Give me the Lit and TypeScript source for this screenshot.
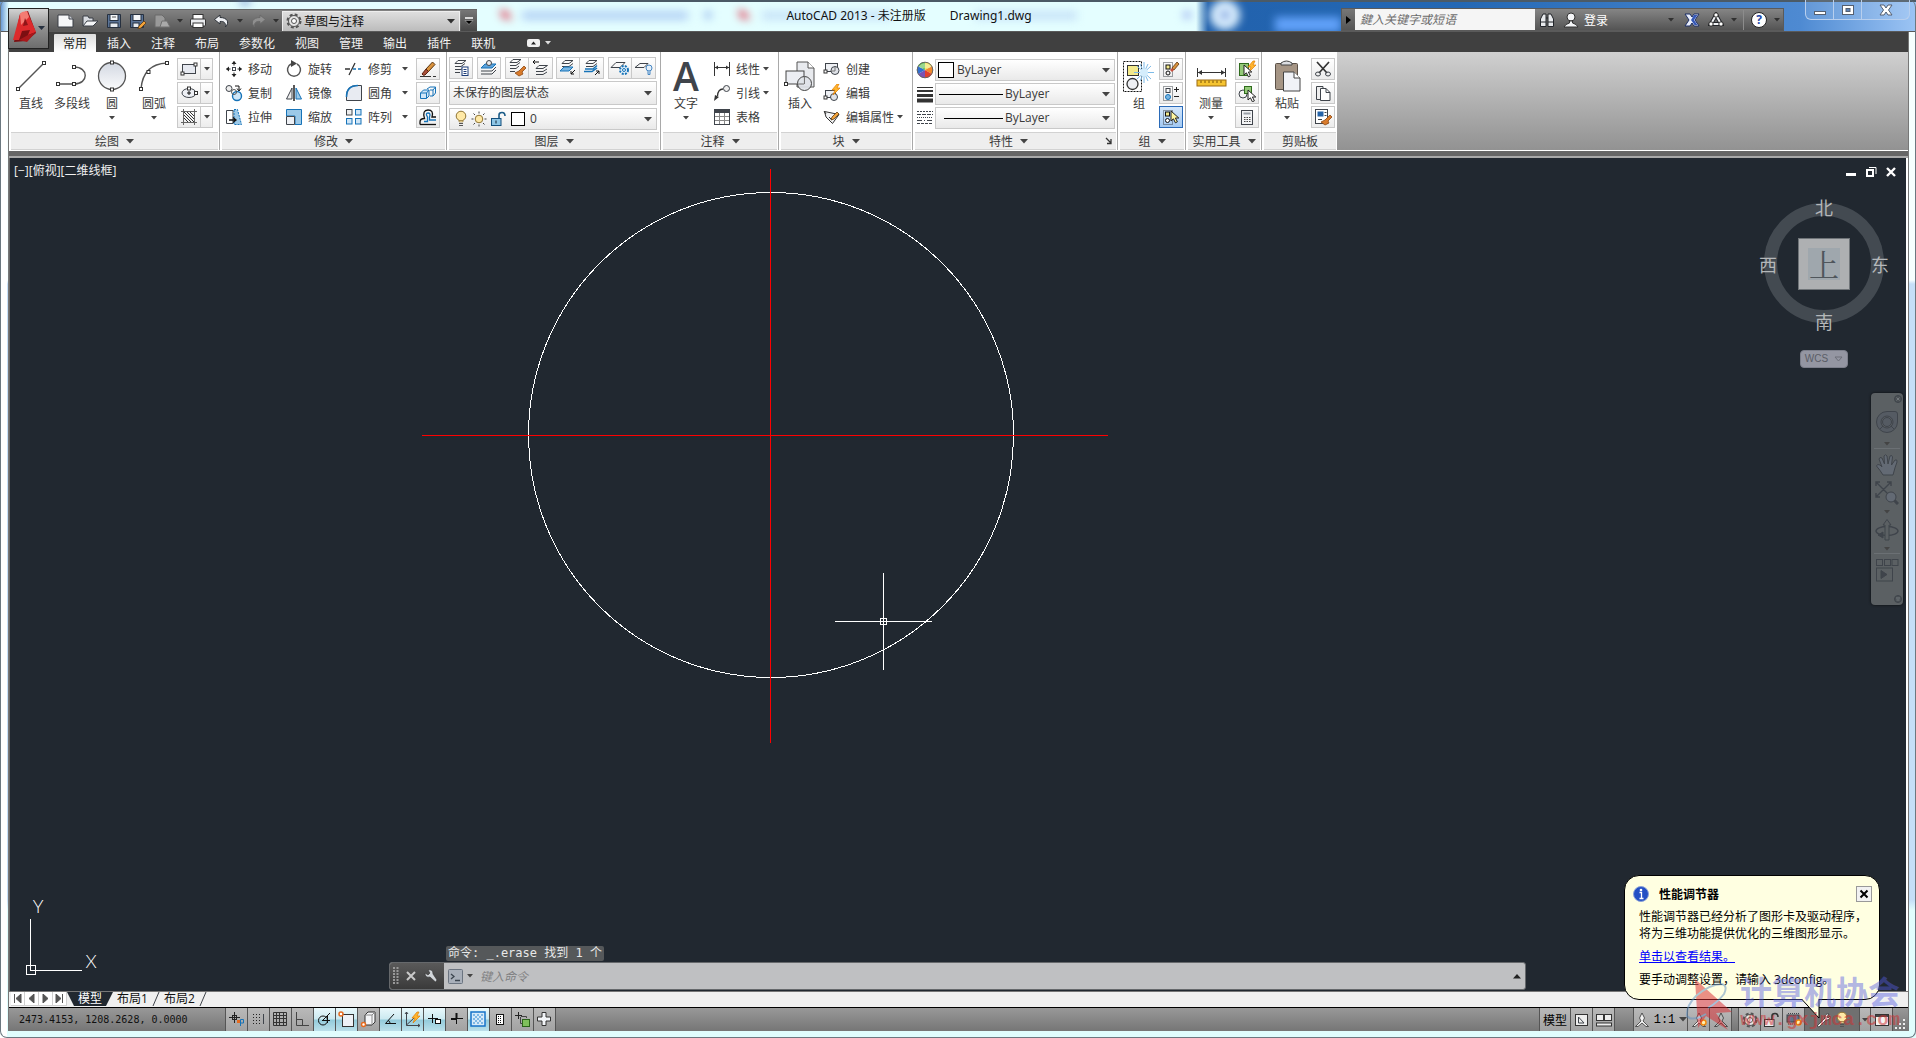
import { LitElement, html, svg, css } from "lit";
import { customElement } from "lit/decorators.js";
import { classMap } from "lit/directives/class-map.js";

const BLUE = "#1673b8";

/* ---------- drawing helpers ---------- */
const ic = (w: number, h: number, body: unknown, cls = "") => html`
  <svg class="ic ${cls}" width=${w} height=${h} viewBox="0 0 ${w} ${h}" aria-hidden="true">${body}</svg>`;
const grip = (x: number, y: number) =>
  svg`<rect x=${x - 1.5} y=${y - 1.5} width="3" height="3" fill="#fff" stroke="#333"/>`;
const caret = html`<svg class="ic caret" width="6" height="4" viewBox="0 0 6 4" aria-hidden="true"><path d="M0 0H6L3 3.5Z" fill="currentColor" stroke="none"/></svg>`;
const bigCaret = html`<svg class="ic caret" width="8" height="5" viewBox="0 0 8 5" aria-hidden="true"><path d="M0 0H8L4 4.5Z" fill="currentColor" stroke="none"/></svg>`;

const sheets = svg`<path d="M6 1.500H14L10 4.500H3ZM3 7.500H9L13 4.500M3 10.500H9L12 8M3 13.500H8" />`;
const pencil = (x: number, y: number) =>
  svg`<path d="M${x} ${y}l5-5 2 2-5 5-3 1z" fill="#f3a33a" stroke="#5d3b12" stroke-width=".8"/>`;
const bolt = (x: number, y: number) =>
  svg`<path d="M${x + 5} ${y}L${x} ${y + 6}H${x + 3}L${x + 1} ${y + 11}L${x + 8} ${y + 4}H${x + 5}L${x + 7} ${y}Z" fill="#ffb52e" stroke="#e07b00" stroke-width=".7"/>`;
const pointer = (x: number, y: number, fill = "#fff") =>
  svg`<path d="M${x} ${y}v10l2.400-2.200 2 4 2-1-2-3.800h3.400z" fill=${fill} stroke="#222"/>`;
const brush = svg`<path d="M17 8L19 10L15 14L16 16L12 18L8 15L12 13L13 12Z" fill="#d97b2b" stroke="#8c4610" stroke-width=".8"/>`;

const I = {
  newFile: ic(18, 16, svg`<path d="M1 2H12L16 6V14H1Z" fill="#f6f7f9" stroke="#3a3f47"/><path d="M12 2V6H16" fill="#c9ccd2" stroke="#3a3f47"/>`),
  open: ic(18, 16, svg`<path d="M2 13V3H7L8 5H12V8" fill="#d8dbe0" stroke="#3a3f47"/><path d="M2 13L6 8H17L12 13Z" fill="#f4f5f7" stroke="#3a3f47"/>`),
  save: ic(16, 16, svg`<path d="M1.500 1.500H14.500V14.500H1.500Z" fill="#5a7396" stroke="#26303f"/><rect x="4" y="1.500" width="8" height="6" fill="#f4f6f8" stroke="#26303f"/><rect x="4" y="10" width="8" height="4.500" fill="#e7ebef" stroke="#26303f"/><path d="M6 4H10" stroke="#555"/>`),
  saveAs: ic(18, 16, svg`<path d="M1.500 1.500H14.500V14.500H1.500Z" fill="#5a7396" stroke="#26303f"/><rect x="4" y="1.500" width="8" height="6" fill="#f4f6f8" stroke="#26303f"/><rect x="4" y="10" width="6" height="4.500" fill="#e7ebef" stroke="#26303f"/>${pencil(10, 13)}`),
  plotGrey: ic(18, 16, svg`<path d="M2 2H9L12 5V14H2Z" fill="#999" stroke="#6a6a6a"/><path d="M7 14L9 8H14L17 14Z" fill="#aaa" stroke="#707070"/>`),
  print: ic(18, 16, svg`<rect x="4" y="1.500" width="10" height="5" fill="#fff" stroke="#333"/><rect x="1.500" y="6" width="15" height="7" rx="1" fill="#e9ebee" stroke="#333"/><rect x="4" y="10" width="10" height="4.500" fill="#fff" stroke="#333"/>`),
  undo: ic(18, 16, svg`<path d="M7 2L1.500 6.500L7 11V8.500C11 8 13 10 12.500 14C17 9 14 4.500 7 4.500Z" fill="#eef0f3" stroke="#2d3239"/>`),
  redo: ic(18, 16, svg`<path d="M11 2L16.500 6.500L11 11V8.500C7 8 5 10 5.500 14C1 9 4 4.500 11 4.500Z" fill="#8f8f8f" stroke="#6b6b6b"/>`),
  gear: ic(16, 16, svg`<circle cx="8" cy="8" r="6" stroke="#555" stroke-width="3" stroke-dasharray="2.700 2"/><circle cx="8" cy="8" r="5.500" fill="#e4e4e4" stroke="#555"/><circle cx="8" cy="8" r="2.500" fill="#fff" stroke="#555"/>`),

  line: ic(32, 32, svg`<path d="M3 29L29 3" stroke="#555" stroke-width="1.400"/>${grip(3, 29)}${grip(29, 3)}`),
  pline: ic(32, 32, svg`<path d="M2 24H18C33 24 33 7 18 7" stroke="#555" stroke-width="1.400"/>${grip(2, 24)}${grip(18, 24)}${grip(18, 7)}`),
  circle: ic(32, 32, svg`<circle cx="16" cy="16" r="13.500" fill="url(#disc)" stroke="#555" stroke-width="1.300"/><defs><linearGradient id="disc" x1="0" y1="0" x2="0" y2="1"><stop offset="0" stop-color="#d3d8e2"/><stop offset="1" stop-color="#fafbfc"/></linearGradient></defs>${grip(16, 2.5)}${grip(16, 29.5)}`),
  arc: ic(32, 32, svg`<path d="M3 29Q5 4 29 3" stroke="#555" stroke-width="1.400"/>${grip(3, 29)}${grip(10.5, 12)}${grip(29, 3)}`),
  rect: ic(18, 16, svg`<rect x="2.500" y="3.500" width="13" height="9" fill="#e6e9f0"/>${grip(2.5, 12.5)}${grip(15.5, 3.5)}`),
  ellipse: ic(18, 16, svg`<ellipse cx="9" cy="8" rx="7" ry="4.500" fill="#eef0f5"/><path d="M7 8H11M9 6V10" stroke="#111"/>${grip(9, 3.5)}${grip(16, 8)}`),
  hatch: ic(18, 18, svg`<path d="M3.500 1V17M14.500 1V17M1 3.500H17M1 14.500H17" stroke="#666"/><path d="M4 4L14 14M4 7L11 14M4 10L8 14M7 4L14 11M10 4L14 8" stroke="#333"/>`),

  move: ic(18, 18, svg`<rect x="7.500" y="7.500" width="3" height="3"/><path d="M9 1.500V5.500M9 12.500V16.500M1.500 9H5.500M12.500 9H16.500" stroke="#222"/><path d="M6.500 4L9 1L11.500 4ZM6.500 14L9 17L11.500 14ZM4 6.500L1 9L4 11.500ZM14 6.500L17 9L14 11.500Z" fill="#222" stroke="none"/>`),
  copy: ic(18, 18, svg`<circle cx="4" cy="4.500" r="3" fill="#eee"/><circle cx="12" cy="12" r="4.500" fill="#cfe6f8" stroke=${BLUE} stroke-width="1.400"/><circle cx="9" cy="8" r="2.500" stroke="#555"/><path d="M10 2H14V6M12 4.500L14 7L16 4.500" stroke="#111"/>`),
  stretch: ic(18, 18, svg`<path d="M1.500 2.500H8V15.500H1.500Z" fill="#fff"/><path d="M9 1.500H12.500L16.500 16.500H9Z" fill="#9cc9e8" stroke=${BLUE} stroke-dasharray="2 1"/><path d="M4 12H10M8 9.500L11 12L8 14.500" stroke="#111" stroke-width="1.300"/>`),
  rotate: ic(18, 18, svg`<path d="M6 4A6.500 6.500 0 1 0 12 4" stroke="#555" stroke-width="1.500"/><path d="M6 0L12 3.500L6 7Z" fill="#444" stroke="none"/>`),
  mirror: ic(18, 18, svg`<path d="M7 4V15H1.500Z" fill="#eee"/><path d="M11 4V15H16.500Z" fill="#9cc9e8" stroke=${BLUE}/><path d="M9 1V17" stroke="#111" stroke-width="1.400"/>`),
  scale: ic(18, 18, svg`<path d="M1.500 1.500H16.500V16.500H10V8H1.500Z" fill="#9cc9e8" stroke=${BLUE}/><path d="M1.500 8.500H9.500V16.500H1.500Z" fill="#eef0f4"/>`),
  trim: ic(20, 18, svg`<path d="M1 9H6M5 15L11 3" stroke="#333" stroke-width="1.300"/><path d="M9 9H19" stroke=${BLUE} stroke-width="1.400" stroke-dasharray="3 2"/>`),
  fillet: ic(18, 18, svg`<path d="M1.500 16.500V12Q1.500 1.500 12 1.500H16.500V16.500Z" fill="#e8ebf2"/><path d="M1.500 13Q1.500 1.500 13 1.500" stroke=${BLUE} stroke-width="1.600"/>`),
  array: ic(18, 18, svg`<rect x="1.500" y="1.500" width="5.500" height="5.500" fill="#eee"/><rect x="10.500" y="1.500" width="5.500" height="5.500" fill="#cfe6f8" stroke=${BLUE}/><rect x="1.500" y="10.500" width="5.500" height="5.500" fill="#cfe6f8" stroke=${BLUE}/><rect x="10.500" y="10.500" width="5.500" height="5.500" fill="#cfe6f8" stroke=${BLUE}/>`),
  erase: ic(18, 18, svg`<path d="M1 16.500H12M14 16.500H17" stroke="#333"/><path d="M7 9L13.500 2L16 4.500L9.500 11.500Z" fill="#d9923d" stroke="#5a3510"/><path d="M3 14L7 9L9.500 11.500L6 15Q4 16 3 14Z" fill="#a8503a" stroke="#5a2010"/>`),
  explode: ic(18, 18, svg`<path d="M1.500 9L4.500 6H10V12L7.500 14.500H1.500Z" fill="#cfe6f8" stroke=${BLUE}/><path d="M1.500 9H7.500V14.500M7.500 9L10 6" stroke=${BLUE}/><path d="M8 5L11 3H16.500V9L14 12H11M11 6H14V12M14 6L16.500 3" stroke=${BLUE}/>`),
  offset: ic(18, 18, svg`<path d="M1 16.500V14Q1 10.500 5.500 10.500Q3 2 9 2Q15 2 13 9H17" stroke="#111" stroke-width="1.300"/><path d="M5 13.500H8.500V9Q6 5 9 5Q12 5 10.500 9V12H17" stroke=${BLUE} stroke-width="1.300"/><path d="M1 16.500H17" stroke="#111" stroke-width="1.300"/>`),

  lyProps: ic(18, 18, svg`${sheets}<rect x="10" y="8" width="6" height="8.500" fill="#fff" stroke="#1d3d78"/><path d="M11.500 10.500H14.500M11.500 12.500H14.500M11.500 14.500H14.500" stroke="#1d3d78"/>`),
  lyCurrent: ic(18, 18, svg`<path d="M5 5H16L12 9H1Z" fill="#5ca2da" stroke=${BLUE}/><path d="M1 12H12L16 8M1 15H12L16 11"/><circle cx="9" cy="4" r="2.500" fill="#eee"/>`),
  lyMatch: ic(20, 20, svg`${sheets}${brush}`),
  lyPrev: ic(18, 18, svg`<path d="M8 6.500H16.500L12 9.500H5ZM5 12.500H12L16 10M5 15.500H12L16 13"/><path d="M8 3H2M4 1L2 3L4 5" stroke="#111"/>`),
  lyIso: ic(18, 18, svg`<path d="M6 1.500H14L10 4.500H3ZM3 7.500H10L14 4.500"/><path d="M5 8H14L10 12H1Z" fill="#7ab6e2" stroke=${BLUE}/><path d="M16 11L12 15M12 12V15H15" stroke="#111"/>`),
  lyUniso: ic(18, 18, svg`<path d="M6 1.500H14L10 4.500H3ZM3 7.500H10L14 4.500"/><path d="M1 12.500H9L14 9M2 10H10L14 6.500" stroke=${BLUE} stroke-width="1.500"/><path d="M12 16L16 12M13 12H16V15" stroke="#111"/>`),
  lyFreeze: ic(20, 18, svg`<path d="M6 3.500H15L10 8.500H1Z"/><circle cx="14" cy="11" r="4" stroke=${BLUE} stroke-width="2" stroke-dasharray="2 1.200" fill="#e8f3fb"/><circle cx="14" cy="11" r="1.500" stroke=${BLUE}/>`),
  lyOff: ic(20, 18, svg`<path d="M6 4.500H14L10 8.500H1Z"/><circle cx="15" cy="9" r="3" fill="#e3effa" stroke="#4686c2"/><path d="M14 12V15.500H16V12" fill="#cfe2f3" stroke="#4686c2"/>`),

  bulb: ic(14, 18, svg`<circle cx="7" cy="6" r="4.800" fill="#ffe9a6" stroke="#8f7433"/><path d="M5 10.500H9V12H5Z" fill="#ffe9a8" stroke="#8f7433" stroke-width=".6"/><path d="M5 13.500H9M5 15.500H9" stroke="#555"/>`),
  sun: ic(16, 16, svg`<circle cx="8" cy="8" r="3.800" fill="#ffe9a6" stroke="#8f7433"/><path d="M8 .5V2.500M8 13.500V15.500M.5 8H2.500M13.500 8H15.500M2.500 2.500L4 4M12 12L13.500 13.500M2.500 13.500L4 12M12 4L13.500 2.500" stroke="#444"/>`),
  lock: ic(17, 16, svg`<rect x="1.500" y="7.500" width="9.500" height="7" fill="#8ec6e6" stroke="#134f7c"/><path d="M6 9.500V12.500" stroke="#123"/><path d="M9 7V4Q9 1.500 12 1.500Q15 1.500 15 5" stroke="#1b5c88" stroke-width="1.600"/>`),

  dimension: ic(18, 16, svg`<path d="M1.500 1V15M16.500 1V15M2 6.500H16" stroke="#333"/><path d="M2 6.500L5 4.500V8.500ZM16 6.500L13 4.500V8.500Z" fill="#333" stroke="none"/>`),
  leader: ic(18, 18, svg`<circle cx="13.500" cy="4.500" r="3" fill="#eee"/><path d="M10 5Q5 5 4.500 12" stroke="#333" stroke-width="1.300"/><path d="M1 17L2 11L6 13Z" fill="#333" stroke="none"/>`),
  table: ic(18, 18, svg`<rect x="1.500" y="1.500" width="15" height="15" fill="#fff"/><path d="M2 3.500H16" stroke="#3f444b" stroke-width="3"/><path d="M6.500 5V16M11.500 5V16M2 8.500H16M2 12.500H16" stroke="#888"/>`),
  insertBlock: ic(32, 32, svg`<path d="M13 2H24L30 8V27H13Z" fill="#e8eaee" stroke="#555"/><path d="M24 2V8H30" fill="#fff" stroke="#555"/><rect x="2" y="11" width="18" height="13" fill="#eceef3" stroke="#444"/>${grip(2, 24)}<circle cx="20.500" cy="23.500" r="7" fill="#dfe2e8" fill-opacity=".9" stroke="#444"/><path d="M20.500 24V17M20 24H14" stroke="#777"/>`),
  createBlock: ic(18, 16, svg`<rect x="2.500" y="2.500" width="12" height="8" fill="#eef0f4"/>${grip(2.5, 10.5)}<circle cx="12" cy="9.500" r="4" fill="#dfe2e8"/><path d="M12 10V6M8 10H12" stroke="#777"/>`),
  editBlock: ic(18, 18, svg`<rect x="2.500" y="6.500" width="10" height="7" fill="#eef0f4"/>${grip(2.5, 13.5)}<circle cx="11" cy="13" r="3.500" fill="#dfe2e8"/>${bolt(9, 0)}`),
  editAttr: ic(18, 18, svg`<path d="M1.500 3.500L16 6.500L9.500 15.500L3 9Z" fill="#f2f3f5" stroke="#333"/><path d="M3 6L1 3M6 9L9 12" stroke="#333"/>${pencil(9, 9)}`),

  wheel: html`<svg class="ic" width="18" height="18" viewBox="0 0 18 18" aria-hidden="true">
      <g stroke="none"><path d="M9 9L9 1A8 8 0 0 1 16 5Z" fill="#f1e24c"/><path d="M9 9L16 5A8 8 0 0 1 16 13Z" fill="#f08a2c"/><path d="M9 9L16 13A8 8 0 0 1 9 17Z" fill="#e0402e"/>
      <path d="M9 9L9 17A8 8 0 0 1 2 13Z" fill="#7a52b5"/><path d="M9 9L2 13A8 8 0 0 1 2 5Z" fill="#2f6fd0"/><path d="M9 9L2 5A8 8 0 0 1 9 1Z" fill="#59bd45"/></g>
      <path d="M2.500 6A7.500 7.500 0 0 1 15.500 6Q9 9 2.500 6Z" fill="#fff" fill-opacity=".4" stroke="none"/><circle cx="9" cy="9" r="7.800" stroke="#666"/></svg>`,
  weights: ic(18, 18, svg`<path d="M1 2.500H17" stroke="#333" stroke-width="1"/><path d="M1 6H17" stroke="#333" stroke-width="2"/><path d="M1 10.500H17" stroke="#333" stroke-width="3"/><path d="M1 15.500H17" stroke="#333" stroke-width="4"/>`),
  ltypes: ic(18, 18, svg`<path d="M1 2.500H17" stroke-dasharray="2 1"/><path d="M1 5.500H17" stroke-dasharray="4 1"/><path d="M1 8.500H17" stroke-dasharray="1 1"/><path d="M1 11.500H17" stroke-dasharray="5 2 1 2"/><path d="M1 14.500H17" stroke-dasharray="3 1"/>`),
  launcher: ic(8, 8, svg`<path d="M1 1L6 6M6 2V6.500H2" stroke="#333" stroke-width="1.300"/>`),

  group: ic(32, 34, svg`<rect x=".5" y="2.500" width="18" height="30" stroke="#111" stroke-dasharray="2 1"/><rect x="4.500" y="6.500" width="11" height="10" fill="#f4ea8c" stroke="#333"/><circle cx="9.500" cy="25" r="5.500" fill="#eef0f4" stroke="#333" stroke-width="1.300"/><path d="M21 3V24M11 13.500H31M14 7L28 20M14 20L28 7M17 5L25 22M25 5L17 22" stroke="#7dbbe8"/><circle cx="21" cy="13.500" r="4" fill="#d4edfc" stroke="none"/>`),
  ungroup: ic(18, 18, svg`<rect x="1.500" y="2.500" width="9" height="14" stroke-dasharray="1 1"/><rect x="4" y="5" width="4" height="4" fill="#f4ea8c" stroke="#111"/><circle cx="6" cy="13" r="2" stroke="#111"/><path d="M10 8L15 2L17 4L12 10Z" fill="#d9923d" stroke="#5a3510" stroke-width=".8"/><path d="M8 10L10 8L12 10L10 12Z" fill="#c6503e" stroke="none"/>`),
  groupEdit: ic(18, 18, svg`<rect x="1.500" y="2.500" width="9" height="14" stroke-dasharray="1 1"/><rect x="4" y="4.500" width="4" height="4"/><circle cx="6" cy="13" r="2.500" fill="#7ab6e2" stroke=${BLUE}/><path d="M12 5.500H17M14.500 3V8M12 12.500H17" stroke="#222"/>`),
  groupSel: ic(18, 18, svg`<rect x="1.500" y="2.500" width="9" height="14" stroke-dasharray="1 1"/><rect x="3.500" y="4" width="4" height="4" fill="#f4ea8c" stroke="#111"/><circle cx="5.500" cy="12.500" r="2" stroke="#111" fill="#fff"/>${pointer(9, 3, "#fff6a0")}`),
  measure: ic(32, 32, svg`<path d="M2.500 8V17M30.500 8V17M3 12.500H30" stroke="#333"/><path d="M3 12.500L7 10V15ZM30 12.500L26 10V15Z" fill="#333" stroke="none"/><rect x="2" y="20" width="29" height="6" fill="#f5c431" stroke="#9c6b10"/><path d="M6 20.500V23M10 20.500V23M14 20.500V23M18 20.500V23M22 20.500V23M26 20.500V23" stroke="#7a5408"/>`),
  quickSel: ic(18, 18, svg`<rect x="1.500" y="3.500" width="9" height="12" fill="#93c978" stroke="#2f6b1c"/>${bolt(10, 1)}${pointer(6, 5)}`),
  selSimilar: ic(18, 18, svg`<circle cx="5" cy="10" r="4"/><rect x="6.500" y="2.500" width="7" height="7" fill="#93c978" stroke="#2f6b1c"/>${pointer(10, 6)}`),
  calc: ic(16, 18, svg`<rect x="2.500" y="2.500" width="11" height="14" fill="#f3f4f6"/><rect x="4.500" y="4.500" width="7" height="2" fill="#9aa0a8" stroke="none"/><path d="M5 9.500H11.500M5 11.500H11.500M5 13.500H11.500" stroke="#444" stroke-dasharray="1.500 1"/>`),
  paste: ic(32, 34, svg`<rect x="4.500" y="4.500" width="22" height="26" rx="1" fill="#a59585" stroke="#5b5148"/><path d="M10 6V4Q15.500 0 21 4V6Z" fill="#dcdee2" stroke="#444"/><path d="M12.500 13H23L29 19V32H12.500Z" fill="#f0f2f7" stroke="#444"/><path d="M23 13V19H29" fill="#fff" stroke="#444"/>`),
  cut: ic(18, 18, svg`<path d="M3 2L13 13M15 2L5 13" stroke="#333" stroke-width="1.700"/><ellipse cx="4" cy="14" rx="2.500" ry="2"/><ellipse cx="14" cy="14" rx="2.500" ry="2"/>`),
  copyClip: ic(18, 18, svg`<path d="M2.500 2.500H9V15.500H2.500Z" fill="#eee"/><path d="M6.500 4.500H12L16 8.500V16.500H6.500Z" fill="#fff"/><path d="M12 4.500V8.500H16"/>`),
  matchProp: ic(20, 20, svg`<rect x="2.500" y="2.500" width="12" height="14" fill="#fff"/><rect x="4.500" y="4.500" width="6" height="5" fill="#2463a8" stroke="none"/><path d="M11.500 5.500H13.500M11.500 8.500H13.500M5 12.500H9"/>${brush}`),
};

const base = css`
  * { box-sizing: border-box; }
  button, select, input { font: inherit; color: inherit; margin: 0; padding: 0; border: 0; background: none; border-radius: 0; }
  button { display: flex; align-items: center; justify-content: center; cursor: default; }
  select { appearance: none; outline: none; }
  svg { display: block; flex: none; }
  .ic { fill: none; stroke: #3f444b; }
  .caret { color: #444; }
`;

/* ================= title bar ================= */
@customElement("cad-titlebar")
class CadTitlebar extends LitElement {
  static styles = [base, css`
    :host { display: block; position: relative; }
    .bar { display: flex; height: 32px; padding-left: 49px; padding-right: 6px; overflow: hidden; border-bottom: 1px solid #5a5a5a;
      background: linear-gradient(90deg, #5d8fd0 0, #e4feff 9px, #e4feff 1196px, #2262ad 1208px, #2468b4 1460px, #4e8ad2 1800px, #9cc4f4 100%); position: relative; }
    .bar::before { content: ""; position: absolute; inset: 0; border-top: 2px solid #4b5a66; pointer-events: none; }
    .glass { position: absolute; left: 0; top: 0; filter: blur(4px); }
    .appbtn { position: absolute; left: 8px; top: 8px; width: 41px; height: 41px; z-index: 2; border: 1px solid #222; background: linear-gradient(#d2d2d2, #8f8f8f 50%, #6d6d6d); }
    .qat { display: flex; align-items: center; height: 23px; margin-top: 9px; padding-left: 5px; background: linear-gradient(#828282, #565656); position: relative; border-top: 1px solid #666; }
    .qat button { width: 24px; height: 22px; }
    .qat button.slim { width: 12px; }
    .qat .caret { color: #303030; }
    .ws { display: flex; align-items: center; width: 178px; height: 21px; padding: 0 4px 0 3px; gap: 2px; background: linear-gradient(#dedede, #bcbcbc); border: 1px solid #eee; }
    .ws select { flex: 1; font-size: 12px; color: #111; height: 19px; }
    .qat button.more { width: 16px; height: 22px; background: linear-gradient(#777, #444); margin-left: 1px; }
    .title { flex: 1; display: flex; align-items: center; justify-content: center; gap: 24px; font-size: 12px; font-family: "Noto Sans", "Noto Sans CJK SC", sans-serif; color: #111; position: relative; padding-bottom: 1px; white-space: nowrap; }
    .search { display: flex; align-items: center; width: 443px; height: 23px; margin-top: 8px; position: relative; background: linear-gradient(#858585, #545454); border: 1px solid #5a5a5a; }
    .search .go { width: 13px; height: 21px; background: linear-gradient(#777, #555); }
    .search input { width: 180px; height: 21px; background: #f5f5f5; padding: 0 5px; font-size: 12px; font-style: italic; outline: none; }
    .search input::placeholder { color: #6c6c6c; opacity: 1; }
    .search button { width: 24px; height: 21px; }
    .search .login { width: auto; padding: 0 6px 0 1px; color: #fff; font-size: 12px; flex: 1; justify-content: flex-start; }
    .search .login span { flex: 1; text-align: left; }
    .search .slim { width: 12px; }
    .search .rule { width: 1px; height: 20px; background: #8c8c8c; margin: 0 3px; }
    .search .caret { color: #303030; }
    .win { display: flex; height: 20px; margin-left: 21px; position: relative; border: 1px solid #b8cfee; border-top: 0; border-radius: 0 0 6px 6px; background: rgba(255,255,255,.1); }
    .win button { width: 28px; height: 19px; border-right: 1px solid #b8cfee; }
    .win button:last-child { width: 47px; border-right: 0; }
  `];
  render() {
    return html`
      <div class="bar">
        <svg class="glass" width="1400" height="32" aria-hidden="true">
          <path d="M500 9L508 12L512 20L502 18Z" fill="#e0566a"/><rect x="522" y="11" width="166" height="9" fill="#a9c8f2" opacity=".8"/><circle cx="708" cy="15" r="4" fill="#9fc0ee"/>
          <path d="M738 9L746 12L750 20L740 18Z" fill="#e0566a"/><rect x="762" y="11" width="130" height="9" fill="#bcd8f5" opacity=".7"/><rect x="975" y="11" width="102" height="9" fill="#bcd8f5" opacity=".7"/>
          <circle cx="1187" cy="15" r="4" fill="#9fb4f0"/><circle cx="1225" cy="15" r="15" fill="#dff2ff"/><circle cx="1225" cy="15" r="5" fill="#88a8e0"/>
          <rect x="1275" y="17" width="66" height="16" fill="#62a2fa"/><rect x="240" y="0" width="10" height="4" fill="#5878c0"/>
        </svg>
        <div class="qat">
          <button aria-label="新建">${I.newFile}</button><button aria-label="打开">${I.open}</button><button aria-label="保存">${I.save}</button>
          <button aria-label="另存为">${I.saveAs}</button><button aria-label="Cloud">${I.plotGrey}</button><button class="slim" aria-label="更多">${caret}</button>
          <button aria-label="打印">${I.print}</button><button aria-label="放弃">${I.undo}</button><button class="slim" aria-label="放弃列表">${caret}</button>
          <button aria-label="重做">${I.redo}</button><button class="slim" aria-label="重做列表">${caret}</button>
          <div class="ws">${I.gear}<select aria-label="工作空间"><option>草图与注释</option></select>${bigCaret}</div>
          <button class="more" aria-label="自定义">${ic(10, 8, svg`<path d="M1 1H9" stroke="#fff" stroke-width="1.500"/><path d="M1 3.500H9L5 7.500Z" fill="#000" stroke="#ccc" stroke-width=".5"/>`)}</button>
        </div>
        <div class="title"><span>AutoCAD 2013 - 未注册版</span><span>Drawing1.dwg</span></div>
        <div class="search">
          <button class="go" aria-label="展开">${ic(6, 8, svg`<path d="M0 0L5 4L0 8Z" fill="#000" stroke="none"/>`)}</button>
          <input aria-label="搜索" placeholder="鍵入关键字或短语" />
          <button aria-label="查找">${ic(16, 16, svg`<path d="M1.500 14.500V7L4 2H7V14.500ZM9 14.500V2H12L14.500 7V14.500Z" fill="#e8eaed" stroke="#23262b"/><path d="M7 6H9M2 10H7M9 10H14" stroke="#23262b"/>`)}</button>
          <button aria-label="用户">${ic(16, 16, svg`<circle cx="8" cy="5" r="4" fill="#f4f5f7" stroke="#333"/><path d="M1 15L3 12.500L6.500 11V9H9.500V11L13 12.500L15 15Z" fill="#f4f5f7" stroke="#333"/>`)}</button>
          <button class="login"><span>登录</span>${caret}</button>
          <button aria-label="Exchange" >${ic(16, 14, svg`<path d="M1 1H6L8 4L10 1H15L11 7L15 13H10L8 10L6 13H1L5 7Z" fill="#e9eefb" stroke="#1d2f66"/><path d="M10 2H13.500L10 7L13.500 12H10.500L7 7Z" fill="#3558b8" stroke="none"/>`)}</button>
          <button aria-label="联机">${ic(16, 16, svg`<path d="M8 3L3 12H13Z" stroke="#23262b" stroke-width="4"/><path d="M8 3L3 12H13Z" stroke="#f0f2f5" stroke-width="2"/><circle cx="8" cy="3" r="2.200" fill="#fff" stroke="#222"/><circle cx="3" cy="12" r="2.200" fill="#fff" stroke="#222"/><circle cx="13" cy="12" r="2.200" fill="#fff" stroke="#222"/>`)}</button>
          <button class="slim" aria-label="联机菜单">${caret}</button><span class="rule"></span>
          <button aria-label="帮助"><svg width="18" height="18" viewBox="0 0 18 18"><circle cx="9" cy="9" r="7.500" fill="#fff" stroke="#222"/><text x="9" y="13" text-anchor="middle" font-size="12" font-weight="700" fill="#1d46a8">?</text></svg></button>
          <button class="slim" aria-label="帮助菜单">${caret}</button>
        </div>
        <div class="win">
          <button aria-label="最小化">${ic(14, 12, svg`<rect x="1.500" y="7.500" width="11" height="3" fill="#fff" stroke="#555f70"/>`)}</button>
          <button aria-label="还原">${ic(14, 12, svg`<rect x="1.500" y="1.500" width="11" height="9" fill="#fff" stroke="#555f70"/><rect x="5" y="4.500" width="4" height="3" fill="#5f84b8" stroke="#555f70"/>`)}</button>
          <button aria-label="关闭">${ic(14, 12, svg`<path d="M1 1H5L7 4L9 1H13L9.500 6L13 11H9L7 8L5 11H1L4.500 6Z" fill="#fff" stroke="#555f70"/>`)}</button>
        </div>
      </div>
      <button class="appbtn" aria-label="应用程序菜单">
        <svg width="39" height="39" viewBox="0 0 39 39">
          <path d="M5 33L11 5L19 2L27 24L17 32Z" fill="#7c0f12"/><path d="M11 5L4 31L10 31L13 22L21 21L19 26L27 23L18 2Z" fill="#dd2a2c"/><path d="M11 5L13 3L18 2L20 8L12 16Z" fill="#f47b72"/>
          <path d="M14 17L19 16L16 9Z" fill="#8f1518"/><path d="M10 31L18 33L27 23L19 26Z" fill="#a8181b"/>
          <path d="M29 17H36L32.500 21Z" fill="#26303f"/>
        </svg>
      </button>`;
  }
}

/* ================= ribbon ================= */
type Item = { icon: unknown; label: string; more?: boolean };

@customElement("cad-ribbon")
class CadRibbon extends LitElement {
  static styles = [base, css`
    :host { display: block; background: #fff; font-size: 12px; color: #3a3a3a; }
    .tabs { display: flex; align-items: flex-end; height: 20px; background: #404040; padding-left: 45px; }
    .tabs button { color: #f2f2f2; height: 18px; padding: 0 10px; line-height: 17px; }
    .tabs button.on { background: linear-gradient(#dcdcdc, #fff); color: #222; border-radius: 1px 1px 0 0; padding: 0 9px; margin: 0 1px 0 0; }
    .tabs .mini { padding-left: 22px; gap: 5px; }
    .tabs .caret { color: #ddd; }
    .panels { display: flex; height: 99px; border-bottom: 1px solid #fff; background: linear-gradient(#d0d0d0, #929292); }
    .panel { display: flex; flex-direction: column; background: #fff; border-right: 1px solid #a9a9a9; }
    .panel:last-child { border-right: 0; }
    .body { display: flex; gap: 1px; height: 80px; padding: 5px 2px 0; }
    .foot { display: flex; align-items: center; height: 18px; background: #eee; border: 1px solid #d2d2d2; border-width: 1px 0; margin: 0 1px 0 2px; }
    .foot button { flex: 1; gap: 7px; height: 16px; }
    .foot .launch { flex: none; width: 14px; }
    .big { flex-direction: column; justify-content: flex-start; height: 72px; white-space: nowrap; }
    .big .pic { height: 37px; display: flex; align-items: center; justify-content: center; }
    .big .cap { line-height: 20px; height: 20px; }
    .big .caret { margin-top: 2px; }
    .glyph { font-size: 39px; line-height: 36px; font-weight: 600; color: #3f444b; }
    .w38 { width: 38px; } .w40 { width: 40px; } .w44 { width: 44px; } .w46 { width: 46px; }
    .col { display: flex; flex-direction: column; }
    .col.c60 { width: 59px; } .col.c74 { width: 73px; } .col.c68 { width: 66px; } .col.c92 { width: 90px; }
    .cmd { display: flex; justify-content: flex-start; height: 24px; white-space: nowrap; }
    .cmd .pic { width: 24px; display: flex; justify-content: center; margin-right: 2px; }
    .cmd span.t { flex: 1; text-align: left; }
    .cmd .caret { margin-right: 7px; }
    .stack { display: flex; flex-direction: column; gap: 2px; padding-top: 1px; }
    .box { width: 24px; height: 22px; border: 1px solid #c9c9c9; background: linear-gradient(#fff, #ececec); }
    .box.on { background: linear-gradient(#d4e7fb, #a3c9f1); border: 1px solid #2a6ab8; }
    .split { display: flex; border: 1px solid #c9c9c9; background: linear-gradient(#fff, #ececec); height: 22px; width: 36px; margin-right: 4px; }
    .split button { width: 22px; height: 20px; }
    .split button:last-child { width: 12px; border-left: 1px solid #c9c9c9; }
    .last { margin-right: 4px; }
    .layers { width: 208px; display: flex; flex-direction: column; gap: 2px; margin-right: 1px; }
    .row { display: flex; justify-content: space-between; height: 22px; padding-right: 1px; }
    .pair { display: flex; }
    .pair .box + .box { border-left: 0; }
    .combo { display: flex; align-items: center; height: 24px; border: 1px solid #c9c9c9; background: linear-gradient(#fff, #e9e9e9); padding: 0 4px 0 3px; gap: 3px; }
    .combo select { flex: 1; min-width: 0; height: 20px; line-height: 18px; }
    .combo.low { height: 22px; margin-top: 1px; padding-left: 4px; }
    .sw { width: 14px; height: 14px; border: 1px solid #000; background: #fff; margin: 0 2px 0 1px; }
    .props { display: flex; flex-direction: column; gap: 2px; padding-top: 2px; }
    .prop { display: flex; align-items: center; gap: 1px; }
    .prop .pic { width: 19px; display: flex; justify-content: center; }
    .prop .combo { width: 180px; height: 22px; padding-left: 2px; gap: 2px; }
    .prop .combo .sw { width: 16px; height: 16px; margin: 0 1px 0 0; }
    .ln { width: 64px; height: 1px; background: #000; margin-left: 1px; }
    .ln.short { width: 59px; margin-left: 6px; }
  `];
  private big(icon: unknown, cap: string, w: string, more = false) {
    return html`<button class="big ${w}"><span class="pic">${icon}</span><span class="cap">${cap}</span>${more ? caret : ""}</button>`;
  }
  private col(w: string, items: Item[]) {
    return html`<div class="col ${w}">${items.map(i => html`<button class="cmd"><span class="pic">${i.icon}</span><span class="t">${i.label}</span>${i.more ? caret : ""}</button>`)}</div>`;
  }
  private stack(items: [unknown, string][], active = -1, extra = "") {
    return html`<div class="stack ${extra}">${items.map(([i, n], k) => html`<button class=${classMap({ box: true, on: k === active })} aria-label=${n}>${i}</button>`)}</div>`;
  }
  private panel(name: string, body: unknown, opts: { menu?: boolean; launch?: boolean } = {}) {
    return html`<section class="panel"><div class="body">${body}</div>
      <div class="foot"><button><span>${name}</span>${opts.menu === false ? "" : bigCaret}</button>${opts.launch ? html`<button class="launch" aria-label="特性选项板">${I.launcher}</button>` : ""}</div></section>`;
  }
  render() {
    const split = (i: unknown, n: string) => html`<div class="split"><button aria-label=${n}>${i}</button><button aria-label="${n}菜单">${caret}</button></div>`;
    const b = (i: unknown, n: string) => html`<button class="box" aria-label=${n}>${i}</button>`;
    return html`
      <nav class="tabs">
        ${["常用", "插入", "注释", "布局", "参数化", "视图", "管理", "输出", "插件", "联机"].map((t, i) => html`<button class=${classMap({ on: i === 0 })}>${t}</button>`)}
        <button class="mini" aria-label="最小化功能区">${ic(13, 8, svg`<rect x="0" y="0" width="13" height="8" rx="2" fill="#f0f0f0" stroke="none"/><path d="M4 5.500L6.500 2.500L9 5.500Z" fill="#222" stroke="none"/>`)}${caret}</button>
      </nav>
      <div class="panels">
        ${this.panel("绘图", html`
          ${this.big(I.line, "直线", "w40")}${this.big(I.pline, "多段线", "w40")}${this.big(I.circle, "圆", "w38", true)}${this.big(I.arc, "圆弧", "w44", true)}
          <div class="stack">${split(I.rect, "矩形")}${split(I.ellipse, "椭圆")}${split(I.hatch, "图案填充")}</div>`)}
        ${this.panel("修改", html`
          ${this.col("c60", [{ icon: I.move, label: "移动" }, { icon: I.copy, label: "复制" }, { icon: I.stretch, label: "拉伸" }])}
          ${this.col("c60", [{ icon: I.rotate, label: "旋转" }, { icon: I.mirror, label: "镜像" }, { icon: I.scale, label: "缩放" }])}
          ${this.col("c74", [{ icon: I.trim, label: "修剪", more: true }, { icon: I.fillet, label: "圆角", more: true }, { icon: I.array, label: "阵列", more: true }])}
          ${this.stack([[I.erase, "删除"], [I.explode, "分解"], [I.offset, "偏移"]], -1, "last")}`)}
        ${this.panel("图层", html`
          <div class="layers">
            <div class="row">${b(I.lyProps, "图层特性")}${b(I.lyCurrent, "置为当前")}<div class="pair">${b(I.lyMatch, "匹配")}${b(I.lyPrev, "上一个")}</div><div class="pair">${b(I.lyIso, "隔离")}${b(I.lyUniso, "取消隔离")}</div><div class="pair">${b(I.lyFreeze, "冻结")}${b(I.lyOff, "关闭")}</div></div>
            <div class="combo"><select aria-label="图层状态"><option>未保存的图层状态</option></select>${bigCaret}</div>
            <div class="combo low">${I.bulb}${I.sun}${I.lock}<span class="sw"></span><select aria-label="图层"><option>0</option></select>${bigCaret}</div>
          </div>`)}
        ${this.panel("注释", html`${this.big(html`<span class="glyph">A</span>`, "文字", "w46", true)}
          ${this.col("c68", [{ icon: I.dimension, label: "线性", more: true }, { icon: I.leader, label: "引线", more: true }, { icon: I.table, label: "表格" }])}`)}
        ${this.panel("块", html`${this.big(I.insertBlock, "插入", "w38")}
          ${this.col("c92", [{ icon: I.createBlock, label: "创建" }, { icon: I.editBlock, label: "编辑" }, { icon: I.editAttr, label: "编辑属性", more: true }])}`)}
        ${this.panel("特性", html`
          <div class="props">
            <div class="prop"><span class="pic">${I.wheel}</span><div class="combo"><span class="sw"></span><select aria-label="颜色"><option>ByLayer</option></select>${bigCaret}</div></div>
            <div class="prop"><span class="pic">${I.weights}</span><div class="combo"><span class="ln"></span><select aria-label="线宽"><option>ByLayer</option></select>${bigCaret}</div></div>
            <div class="prop"><span class="pic">${I.ltypes}</span><div class="combo"><span class="ln short"></span><select aria-label="线型"><option>ByLayer</option></select>${bigCaret}</div></div>
          </div>`, { launch: true })}
        ${this.panel("组", html`${this.big(I.group, "组", "w38")}${this.stack([[I.ungroup, "解除编组"], [I.groupEdit, "组编辑"], [I.groupSel, "组选择"]], 2)}`)}
        ${this.panel("实用工具", html`${this.big(I.measure, "测量", "w46", true)}${this.stack([[I.quickSel, "快速选择"], [I.selSimilar, "选择类似"], [I.calc, "计算器"]])}`)}
        ${this.panel("剪贴板", html`${this.big(I.paste, "粘贴", "w46", true)}${this.stack([[I.cut, "剪切"], [I.copyClip, "复制"], [I.matchProp, "特性匹配"]])}`, { menu: false })}
      </div>`;
  }
}

/* ================= drawing area ================= */
@customElement("cad-viewport")
class CadViewport extends LitElement {
  static styles = [base, css`
    :host { display: block; position: relative; background: #212830; overflow: hidden; }
    .sheet { position: absolute; inset: 0; width: 100%; height: 100%; shape-rendering: crispEdges; fill: none; }
    .vplabel { position: absolute; left: 4px; top: 4px; display: flex; font-size: 12px; line-height: 17px; color: #f0f0f0; }
    .vpctl { position: absolute; right: 9px; top: 8px; display: flex; gap: 8px; }
    .vpctl button { width: 12px; height: 12px; }
    .cube { position: absolute; right: 14px; top: 38px; width: 136px; height: 136px; display: grid; grid-template-columns: 24px 1fr 24px; grid-template-rows: 22px 1fr 22px; place-items: center; color: #b4b7b9; font: 18px/20px "Noto Sans CJK SC", sans-serif; }
    .cube .ring { position: absolute; left: 8px; top: 7px; width: 120px; height: 120px; border: 13px solid #434a51; border-radius: 50%; }
    .cube span, .cube button { position: relative; }
    .n { grid-area: 1 / 2; } .w { grid-area: 2 / 1; } .e { grid-area: 2 / 3; } .s { grid-area: 3 / 2; }
    .cube .top { grid-area: 2 / 2; width: 52px; height: 52px; background: #aeb0b2; border: 1px solid #6f7478; }
    .top i { width: 32px; height: 32px; line-height: 31px; font-size: 30px; font-style: normal; font-family: "Noto Serif CJK SC", "Noto Sans CJK SC", serif; color: #4f565c; background: #9fa7ad; }
    .wcs { position: absolute; right: 58px; top: 192px; width: 48px; height: 18px; border-radius: 4px; background: #9496a2; border: 1px solid #7c7f8b; color: #5a5d66; font: 10px/16px "Liberation Sans", sans-serif; gap: 6px; }
    .nav { position: absolute; right: 3px; top: 235px; width: 32px; display: flex; flex-direction: column; align-items: center; border-radius: 4px; background: #5b6063; box-shadow: 0 0 2px 1px #171b20; height: 212px; }
    .nav button { width: 100%; }
    .nav .ic { stroke: #3f444b; }
    .nav hr { width: 26px; height: 1px; border: 0; background: #6b7074; margin: 0 0 2px; }
    .nav .cnr { height: 12px; justify-content: flex-end; padding-right: 1px; }
    .nav .a { height: 34px; } .nav .b { height: 28px; } .nav .m { height: 9px; }
    .nav .fill { flex: 1; }
    .ucs { position: absolute; left: 14px; bottom: 14px; overflow: visible; font-family: Lato, "Open Sans", sans-serif; }
    .cmd { position: absolute; left: 379px; right: 380px; bottom: 1px; }
    .hist { display: inline-block; margin-left: 57px; padding: 0 2px; background: #55585a; border-radius: 2px; color: #e8e8e8; font: 12px/15px "DejaVu Sans Mono", "Noto Sans CJK SC", monospace; height: 15px; vertical-align: bottom; white-space: pre; margin-bottom: 1px; }
    .line { display: flex; height: 28px; border: 1px solid #66696c; border-radius: 3px; background: #bfc0c2; overflow: hidden; align-items: center; }
    .line .dark { display: flex; align-items: center; width: 54px; height: 26px; background: linear-gradient(#5a5a5a, #3a3a3a); gap: 3px; padding-left: 3px; }
    .line .dark button { width: 17px; height: 20px; }
    .line .pr { width: 32px; height: 24px; gap: 4px; }
    .line input { flex: 1; font-size: 12px; height: 24px; outline: none; font-style: italic; padding-left: 4px; }
    .line input::placeholder { color: #7f8083; opacity: 1; }
    .line .up { width: 16px; height: 24px; }
  `];
  render() {
    return html`
      <svg class="sheet" aria-hidden="true">
        <circle cx="761" cy="277" r="242.500" stroke="#fff"/>
        <path d="M412 277.500H1098M760.500 11V585" stroke="#ff0000"/>
        <path d="M825 463.500H870M877 463.500H922M873.500 415V460M873.500 467V512" stroke="#fff"/>
        <rect x="870.500" y="460.500" width="6" height="6" stroke="#fff"/><path d="M871 463.500H877M873.500 461V467" stroke="#fff"/>
      </svg>
      <div class="vplabel"><span>[−]</span><span>[俯视]</span><span>[二维线框]</span></div>
      <div class="vpctl">
        <button aria-label="最小化">${ic(12, 12, svg`<rect x="1" y="7" width="10" height="3" fill="#fff" stroke="none"/>`)}</button>
        <button aria-label="还原">${ic(12, 12, svg`<path d="M4 1.500H11V8" stroke="#fff"/><rect x="2" y="4" width="6" height="6" stroke="#fff" stroke-width="2"/>`)}</button>
        <button aria-label="关闭">${ic(12, 12, svg`<path d="M2 2L10 10M10 2L2 10" stroke="#fff" stroke-width="2.400"/>`)}</button>
      </div>
      <div class="cube">
        <div class="ring"></div><span class="n">北</span><span class="w">西</span><span class="e">东</span><span class="s">南</span>
        <button class="top"><i>上</i></button>
      </div>
      <button class="wcs">WCS ${ic(9, 6, svg`<path d="M1 1H8L4.500 5Z" stroke="#6c6f79"/>`)}</button>
      <div class="nav">
        <button class="cnr" aria-label="关闭导航栏">${ic(8, 8, svg`<circle cx="4" cy="4" r="3.500" fill="#4b5054"/><path d="M2.500 2.500L5.500 5.500M5.500 2.500L2.500 5.500" stroke="#73787c"/>`)}</button>
        <button class="a" aria-label="控制盘">${ic(24, 24, svg`<path d="M12 1.500H20Q22.500 1.500 22.500 4V12A10.500 10.500 0 1 1 12 1.500Z" fill="#555b63"/><circle cx="12" cy="12" r="6" fill="#5b6063"/><circle cx="12" cy="12" r="4.500" fill="#555b63"/><path d="M5 19L8 16M19 19L16 16"/>`)}</button>
        <button class="m" aria-label="控制盘菜单">${caret}</button><hr />
        <button class="b" aria-label="平移">${ic(24, 24, svg`<path d="M8 22Q5 17 1.500 13Q2 10.500 5 12L7 14L4 6Q4.500 3.500 7 5L9.500 11L9 3Q10.500 .5 12 3L13 11L15 3Q17 1.500 17.500 4L16.500 12L20 7Q22.500 6 22 9Q20 14 18 22Z" fill="#636a74"/>`)}</button>
        <button class="b" aria-label="缩放">${ic(24, 24, svg`<path d="M1 1L16 16M16 1L1 16M1 5V1H5M12 1H16V5M1 12V16H5" stroke-width="1.400"/><circle cx="16" cy="16" r="5" fill="#636a74"/><path d="M19.500 19.500L23 23" stroke-width="3"/>`)}</button>
        <button class="m" aria-label="缩放菜单">${caret}</button>
        <button class="b" aria-label="动态观察">${ic(24, 24, svg`<ellipse cx="12" cy="13" rx="11" ry="4.500" stroke-width="1.400"/><path d="M10 22V7H8L12 1.500L16 7H14V22Z" fill="#5b6063"/><path d="M8 14V20L3 17Z" fill="#3f444b"/>`)}</button>
        <button class="m" aria-label="动态观察菜单">${caret}</button><hr />
        <button class="b" aria-label="ShowMotion">${ic(24, 24, svg`<rect x="1.500" y="1.500" width="6" height="6"/><rect x="9.500" y="1.500" width="6" height="6"/><rect x="17" y="1.500" width="6" height="6"/><rect x="1.500" y="10" width="16" height="13"/><path d="M6 12.500L12 16.500L6 20.500Z" fill="#3f444b"/>`)}</button>
        <span class="fill"></span>
        <button class="cnr" aria-label="自定义">${ic(8, 8, svg`<circle cx="4" cy="4" r="3.500" fill="#4b5054"/><path d="M2 3H6M2.500 5H5.500" stroke="#73787c"/>`)}</button>
      </div>
      <svg class="ucs" width="78" height="78" viewBox="0 0 78 78" fill="none" stroke="#fff">
        <path d="M6.500 20V71.500H58M2.500 66.500H11.500V75.500H2.500Z" shape-rendering="crispEdges"/>
        <text x="14" y="14" text-anchor="middle" fill="#fff" stroke="none" font-size="18" font-weight="300">Y</text>
        <text x="67" y="69" text-anchor="middle" fill="#fff" stroke="none" font-size="18" font-weight="300">X</text>
      </svg>
      <div class="cmd">
        <div class="hist">命令: _.erase 找到 1 个</div>
        <div class="line">
          <div class="dark">
            ${ic(6, 18, svg`<path d="M1 0V18M4.500 0V18" stroke="#999" stroke-width="2" stroke-dasharray="2 1"/>`)}
            <button aria-label="关闭">${ic(10, 10, svg`<path d="M1 1L9 9M9 1L1 9" stroke="#c9c9c9" stroke-width="2"/>`)}</button>
            <button aria-label="自定义">${ic(14, 14, svg`<path d="M1 4L4 6L6 4L4 1Q9 0 9 5L13 11L11.500 13L6 8Q1 9 1 4Z" fill="#d2d6da" stroke="#333" stroke-width=".6"/>`)}</button>
          </div>
          <button class="pr" aria-label="最近使用的命令">${ic(15, 15, svg`<rect x=".5" y=".5" width="14" height="14" rx="1" fill="#a9b0ba" stroke="#6b7480"/><path d="M3 5L6 7.500L3 10M7 11.500H12" stroke="#3d4650" stroke-width="1.300"/>`)}${caret}</button>
          <input aria-label="命令行" placeholder="键入命令" />
          <button class="up" aria-label="历史">${ic(8, 5, svg`<path d="M0 4.500H8L4 0Z" fill="#222" stroke="none"/>`)}</button>
        </div>
      </div>`;
  }
}

/* ================= bottom bars ================= */
@customElement("cad-statusbar")
class CadStatusbar extends LitElement {
  static styles = [base, css`
    :host { display: block; }
    .layouts { display: flex; align-items: stretch; height: 16px; background: #f0f0f0; padding-left: 2px; font-size: 12px; color: #111; border-top: 1px solid #777; }
    .layouts .step { width: 14px; height: 14px; border: 1px solid #d0d0d0; border-width: 0 1px 1px 0; background: #fff; color: #555; }
    .layouts .tab { height: 14px; line-height: 14px; padding: 0 4px; }
    .layouts .tab.on { background: #212830; color: #fff; clip-path: polygon(0 0, 100% 0, calc(100% - 7px) 100%, 7px 100%); padding: 0 11px; }
    .status { display: flex; align-items: stretch; height: 24px; border-top: 1px solid #000; background: linear-gradient(#989898, #767676); font-size: 12px; }
    .coord { width: 216px; padding-left: 10px; display: flex; align-items: center; font: 10px/22px "DejaVu Sans Mono", "Liberation Mono", monospace; color: #111; white-space: pre; }
    .status button { width: 22px; border-right: 1px solid #555; background: linear-gradient(#b9b9b9, #a2a2a2); }
    .set { display: flex; border-left: 1px solid #555; }
    .status button.on { background: linear-gradient(#e9f8fb, #cbe9f0 48%, #93cbdb 52%, #bbe0ea); }
    .status button.wide { width: 31px; color: #000; }
    .status button.scale { width: 54px; gap: 4px; color: #000; font: 12px "Liberation Mono", monospace; padding: 0; }
    .status button.slim { width: 11px; }
    .gap { flex: 1; }
    .s1 { margin-right: 18px; } .s2 { margin-right: 6px; }
    .tray { display: flex; align-items: center; justify-content: flex-end; width: 55px; gap: 4px; padding-right: 10px; background: #707070; border-right: 1px solid #555; }
    .resize { width: 15px; display: flex; align-items: flex-end; justify-content: flex-end; padding: 2px; }
  `];
  render() {
    const k = "#111";
    const toggles: [string, boolean, unknown][] = [
      ["推断约束", false, svg`<path d="M1 6.500H12M6.500 1V12" stroke="#222"/><rect x="4.500" y="4.500" width="4" height="4" stroke="#222"/><rect x="9" y="9" width="3" height="3" fill="#e66a1e" stroke="none"/><path d="M12.500 15V8.500H15.500V12H12.500" stroke=${BLUE}/>`],
      ["捕捉模式", false, svg`<path d="M3 3.500H12M3 6.500H12M3 9.500H12M3 12.500H12" stroke="#222" stroke-dasharray="1 2"/><path d="M13.500 3V13"/>`],
      ["栅格显示", false, svg`<path d="M1.500 1.500H14.500V14.500H1.500ZM4.500 1V15M7.500 1V15M11.500 1V15M1 4.500H15M1 7.500H15M1 11.500H15" stroke="#333"/>`],
      ["正交模式", false, svg`<path d="M2.500 1V14.500H15M2.500 8.500H8.500V14" stroke="#444"/>`],
      ["极轴追踪", true, svg`<circle cx="7" cy="9.500" r="4.500" stroke=${k}/><path d="M6 10L14 2M7 9.500H14M11.500 5V12" stroke=${k}/>`],
      ["对象捕捉", true, svg`<rect x="4.500" y="3.500" width="11" height="12" fill="#eef1f6" stroke="#333"/><circle cx="3" cy="3" r="2" fill="#fff" stroke="#e66a1e" stroke-width="1.500"/>`],
      ["三维对象捕捉", false, svg`<path d="M5 4L8 1H15V11L12 14H5Z" fill="#f5f6f8" stroke="#333"/><path d="M5 4H12V14M12 4L15 1" stroke="#888"/><circle cx="3.500" cy="13.500" r="2" fill="#fff" stroke="#e66a1e" stroke-width="1.500"/>`],
      ["对象捕捉追踪", true, svg`<path d="M12 3L3.500 12.500H14M6 9.500Q8 10 8 12" stroke=${k}/>`],
      ["动态UCS", true, svg`<path d="M2.500 1V14.500H16M2.500 14L10 7M1 3L2.500 1L4 3M14 13L16 14.500L14 16"/>${bolt(8, 1)}`],
      ["动态输入", true, svg`<path d="M2 7.500H12M6.500 3V12" stroke=${k}/><rect x="9.500" y="8.500" width="5" height="4" fill="#fff" stroke=${k}/>`],
      ["线宽", false, svg`<path d="M8 7.500H15M8.500 7V13" stroke=${k}/><path d="M8.500 2V8M3 8H9" stroke=${k} stroke-width="2"/>`],
      ["透明度", true, svg`<rect x="1" y="1" width="14" height="14" fill="#d6eaf9" stroke="#1673c8" stroke-width="1.500"/><path d="M3 4H13M3 8H13M3 12H13" stroke="#7fb8e4" stroke-width="2" stroke-dasharray="2 2"/><path d="M5 6H13M5 10H13" stroke="#7fb8e4" stroke-width="2" stroke-dasharray="2 2"/>`],
      ["快捷特性", false, svg`<rect x="4.500" y="3.500" width="7" height="10" fill="#fff" stroke=${k}/><path d="M6 5.500H10M6 7.500H10M6 9.500H10M6 11.500H10" stroke=${k} stroke-dasharray="1 1"/>`],
      ["选择循环", false, svg`<path d="M1 4.500H8M4.500 1V8" stroke="#222"/><path d="M7 5.500H12.500V7M6.500 6V12.500H8" stroke="#444"/><rect x="8.500" y="8.500" width="7" height="7" fill="#7fc05c" stroke="#2c641a"/>`],
      ["注释监视器", false, svg`<path d="M6 1.500H10V6H14.500V10H10V14.500H6V10H1.500V6H6Z" fill="#f2f4f7" stroke="#333"/>`],
    ];
    const person = (c: string) => svg`<path d="M8 1L10.500 6L9 9L14.500 14.500L12 14.500L8 11L4 14.500L1.500 14.500L7 9L5.500 6Z" fill=${c} stroke="#333" stroke-width=".8"/>`;
    const spark = svg`<circle cx="12.500" cy="10.500" r="2.500" fill="#fff0b0" stroke="#f08a10" stroke-width="1.500"/>`;
    return html`
      <div class="layouts">
        ${[svg`<path d="M1.500 0V9M8 0V9L3 4.500Z"/>`, svg`<path d="M7 0V9L2 4.500Z"/>`, svg`<path d="M2 0V9L7 4.500Z"/>`, svg`<path d="M7.500 0V9M1 0V9L6 4.500Z"/>`]
          .map((p, i) => html`<button class="step" aria-label=${["第一个", "上一个", "下一个", "最后一个"][i]}>${html`<svg width="9" height="9" viewBox="0 0 9 9" fill="#555" stroke="#555">${p}</svg>`}</button>`)}
        <button class="tab on">模型</button><button class="tab">布局1</button>${ic(8, 14, svg`<path d="M1 14L7 0"/>`)}<button class="tab">布局2</button>${ic(8, 14, svg`<path d="M1 14L7 0"/>`)}
      </div>
      <div class="status">
        <div class="coord">2473.4153, 1208.2628, 0.0000</div>
        <div class="set">${toggles.map(([n, on, g]) => html`<button class=${classMap({ on })} aria-label=${n}>${ic(17, 17, g)}</button>`)}</div>
        <span class="gap"></span>
        <div class="set s1"><button class="wide">模型</button><button aria-label="布局">${ic(15, 14, svg`<rect x="1.500" y="1.500" width="12" height="11" fill="#eee" stroke="#333"/><path d="M4.500 4V10H10Z"/>`)}</button><button aria-label="快速查看">${ic(18, 14, svg`<rect x="1.500" y="1.500" width="7" height="6" fill="#eee" stroke="#333"/><rect x="9.500" y="1.500" width="7" height="6" fill="#eee" stroke="#333"/><rect x="1.500" y="10" width="15" height="3" fill="#eee" stroke="#333"/>`)}</button></div>
        <div class="set s2"><button class="scale">${ic(16, 16, person("#f4f4f4"))}<span>1:1</span>${bigCaret}</button><button aria-label="注释可见性">${ic(16, 16, svg`${person("#f4f4f4")}${spark}`)}</button><button aria-label="自动缩放">${ic(16, 16, person("#bbb"))}</button></div>
        <div class="set"><button aria-label="切换工作空间">${I.gear}</button><button aria-label="锁定">${ic(17, 16, svg`<rect x="1.500" y="7.500" width="9.500" height="7" fill="#eee" stroke="#333"/><path d="M9 7V4Q9 1.500 12 1.500Q15 1.500 15 5" stroke="#333" stroke-width="1.600"/>`)}</button><button aria-label="硬件加速">${ic(16, 16, svg`<rect x="1" y="3" width="12" height="7" fill="#63738c"/><path d="M2 1.500H13M2 12H10" stroke-dasharray="1 1"/>${spark}`)}</button></div>
        <div class="tray">${ic(16, 16, svg`<path d="M2 14L10 6Q10 1 14 2L12 5L13 6L15 4Q16 8 11 8L4 15Z" fill="#eee" stroke="#333" stroke-width=".8"/>`)}${I.bulb}</div>
        <button class="slim" aria-label="状态栏菜单">${caret}</button><button aria-label="全屏显示">${ic(16, 14, svg`<rect x="1.500" y="1.500" width="13" height="11" fill="#f4f4f4" stroke="#333"/><path d="M2 3H14" stroke="#444" stroke-width="2"/>`)}</button>
        <span class="resize">${ic(11, 11, svg`<path d="M8 2H10M4 6H6M8 6H10M0 10H2M4 10H6M8 10H10" stroke="#eee" stroke-width="2"/>`)}</span>
      </div>`;
  }
}

/* ================= window ================= */
@customElement("app-root")
class AppRoot extends LitElement {
  static styles = [base, css`
    :host { display: flex; flex-direction: column; min-height: 100vh; position: relative; overflow: hidden; font-family: "Open Sans", "Noto Sans CJK SC", sans-serif; font-size: 12px;
      background: linear-gradient(90deg, #fff 0 7px, transparent 7px), linear-gradient(#f6ffff 0 280px, #c5dff8 284px 900px, #e0fdfd 910px); }
    .client { flex: 1; display: flex; flex-direction: column; margin: 0 7px 7px 8px; }
    .inner { flex: 1; display: flex; flex-direction: column; border: 1px solid #777; border-top: 0; border-bottom: 0; }
    .edge { height: 7px; background: #666; border-bottom: 2px solid #a9a9a9; }
    .work { flex: 1; display: flex; border-left: 1px solid #666; border-right: 2px solid #fff; background: #212830; }
    cad-viewport { flex: 1; }
    .frame { position: absolute; inset: 0; border: 1px solid #6b7880; border-top: 0; border-radius: 7px; pointer-events: none; z-index: 4; }
    .tip { position: absolute; right: 36px; bottom: 38px; width: 256px; height: 125px; z-index: 5; background: #ffffe1; border: 1px solid #000; border-radius: 15px; padding: 8px 14px 0; color: #000; line-height: 17px; }
    .tip .head { display: flex; align-items: center; height: 20px; margin-left: -6px; margin-right: -7px; font-weight: 700; }
    .tip .head span { flex: 1; padding-left: 10px; }
    .tip .head button { width: 16px; height: 16px; border: 1px solid #999; background: #f2f2f2; }
    .tip p { margin: 0 -8px 6px 0; white-space: nowrap; }
    .tip .first { margin-top: 4px; }
    .tip a { color: #0000ff; }
    .tail { position: absolute; left: 176px; top: 123px; }
    .mark { position: absolute; right: 16px; bottom: 6px; z-index: 6; display: flex; align-items: flex-end; pointer-events: none; }
    .mark div { display: flex; flex-direction: column; align-items: flex-end; }
    .cn { font-size: 32px; line-height: 32px; font-weight: 700; color: rgba(84, 92, 226, .45); }
    .url { font: 700 19px/24px "Liberation Mono", monospace; color: rgba(205, 50, 50, .55); }
  `];
  render() {
    return html`
      <cad-titlebar></cad-titlebar>
      <div class="client">
        <div class="inner">
          <cad-ribbon></cad-ribbon>
          <div class="edge"></div>
          <div class="work"><cad-viewport></cad-viewport></div>
          <cad-statusbar></cad-statusbar>
        </div>
      </div>
      <div class="frame"></div>
      <div class="tip" role="status">
        <div class="head">
          <svg width="16" height="16" viewBox="0 0 16 16"><circle cx="8" cy="8" r="7.500" fill="#2450c4" stroke="#8aa0d8"/><circle cx="8" cy="4" r="1.300" fill="#fff"/><path d="M6.500 6.500H8.500V12M6.500 12.500H10.500" stroke="#fff" stroke-width="1.300" fill="none"/></svg>
          <span>性能调节器</span>
          <button aria-label="关闭">${ic(10, 10, svg`<path d="M1.500 1.500L8.500 8.500M8.500 1.500L1.500 8.500" stroke="#000" stroke-width="2"/>`)}</button>
        </div>
        <p class="first">性能调节器已经分析了图形卡及驱动程序，<br />将为三维功能提供优化的三维图形显示。</p>
        <p><a href="#results">单击以查看结果。</a></p>
        <p>要手动调整设置，请输入 3dconfig。</p>
        <svg class="tail" width="20" height="22" viewBox="0 0 20 22"><path d="M1 0L18 19V0Z" fill="#ffffe1"/><path d="M1 .5L18 19V0" fill="none" stroke="#000"/></svg>
      </div>
      <div class="mark">
        <svg width="56" height="54" viewBox="0 0 56 54"><g opacity=".5"><path d="M11 1L48 34L32 35L44 52L22 38L14 50Z" fill="#d8242a"/><path d="M38 6Q26 6 12 18Q2 28 3 38Q8 44 22 36M38 6Q44 8 40 16Q34 24 24 30" fill="none" stroke="#5f8fc0" stroke-width="2"/></g></svg>
        <div><span class="cn">计算机协会</span><span class="url">www.gxjmca.com</span></div>
      </div>`;
  }
}
